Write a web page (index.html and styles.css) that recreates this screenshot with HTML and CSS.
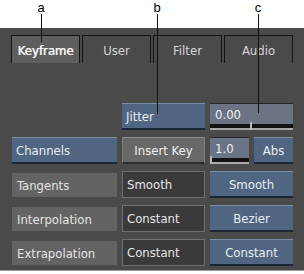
FILE: index.html
```html
<!DOCTYPE html>
<html lang="en">
<head>
<meta charset="UTF-8" />
<title>Keyframe</title>
<link rel="stylesheet" href="styles.css">
</head>
<body>
  <div class="shot">
    <!-- callouts -->
    <div class="callout callout-a"><span>a</span><i></i></div>
    <div class="callout callout-b"><span>b</span><i></i></div>
    <div class="callout callout-c"><span>c</span><i></i></div>

    <main class="panel">
      <nav class="tabs">
        <div class="tab active">Keyframe</div>
        <div class="tab">User</div>
        <div class="tab">Filter</div>
        <div class="tab">Audio</div>
      </nav>

      <section class="controls">
        <div></div>
        <div class="btn blue left">Jitter</div>
        <div class="value">
          <div class="value-text">0.00</div>
          <div class="value-bar"><b style="left: 40px"></b></div>
        </div>

        <div class="btn blue left wide">Channels</div>
        <div class="btn gray">Insert Key</div>
        <div class="pair">
          <div class="value">
            <div class="value-text">1.0</div>
            <div class="value-bar"><b style="left: 0px"></b></div>
          </div>
          <div class="btn blue">Abs</div>
        </div>

        <div class="label">Tangents</div>
        <div class="field">Smooth</div>
        <div class="btn blue">Smooth</div>

        <div class="label">Interpolation</div>
        <div class="field">Constant</div>
        <div class="btn blue">Bezier</div>

        <div class="label">Extrapolation</div>
        <div class="field">Constant</div>
        <div class="btn blue">Constant</div>
      </section>
    </main>
  </div>
</body>
</html>
```

FILE: styles.css
```css
/* Base */
* {
  box-sizing: border-box;
}
body {
  margin: 0;
  background: #fff;
  font-family: "DejaVu Sans Condensed", "DejaVu Sans", sans-serif;
  font-stretch: condensed;
  font-size: 13px;
}
.shot {
  position: relative;
  width: 304px;
  height: 274px;
  overflow: hidden;
}

/* Callout letters and leader lines */
.callout {
  position: absolute;
  top: 0;
  z-index: 2;
}
.callout span {
  position: absolute;
  top: 0;
  left: -6px;
  width: 12px;
  text-align: center;
  font-family: "Liberation Sans", Arial, sans-serif;
  font-stretch: normal;
  font-size: 13px;
  line-height: normal;
  color: #000;
}
.callout i {
  position: absolute;
  left: 0;
  top: 14px;
  width: 1px;
  background: #111;
}
.callout-a { left: 41px; }
.callout-a i { height: 28px; }
.callout-b { left: 157px; }
.callout-b i { height: 100px; }
.callout-c { left: 258px; }
.callout-c i { height: 99px; }

/* Panel */
.panel {
  margin-top: 28px;
  height: 243px;
  background: #4a4a4a;
  border-bottom: 1px solid #9c9c9c;
  padding-top: 7px;
}
.tabs {
  display: flex;
  gap: 2px;
  padding-left: 11px;
}
.tab {
  width: 69px;
  height: 28px;
  border: 1px solid #141414;
  border-bottom: none;
  display: flex;
  align-items: center;
  justify-content: center;
  color: #d6d6d6;
  padding-top: 1px;
}
.tab.active {
  background: #5e5e5e;
  color: #f4f4f4;
  text-shadow: 0.5px 0 0 #f4f4f4;
}

/* Control grid */
.controls {
  margin-top: 40px;
  padding-left: 12px;
  display: grid;
  grid-template-columns: 105px 83px 83px;
  grid-auto-rows: 27px;
  column-gap: 5px;
  row-gap: 7px;
}
.btn {
  display: flex;
  align-items: center;
  justify-content: center;
  color: #e9edf2;
  border-top: 1px solid #7d8ea3;
  border-bottom: 2px solid #1c2535;
}
.btn.left {
  justify-content: flex-start;
  padding-left: 4px;
}
.btn.blue {
  background: #4f6581;
}
.btn.gray {
  background: #686868;
  border-top-color: #8c8c8c;
  border-left: 1px solid #7e7e7e;
  border-right: 1px solid #7e7e7e;
  border-bottom-color: #2c2c2c;
  color: #f0f0f0;
}
.label {
  margin: 2px 0 1px;
  background: #636363;
  color: #e4e4e4;
  display: flex;
  align-items: center;
  padding-left: 5px;
}
.field {
  background: #3a3a3a;
  border: 1px solid #707070;
  color: #e6e6e6;
  display: flex;
  align-items: center;
  padding-left: 4px;
}

/* Numeric value with slider bar */
.value {
  display: flex;
  flex-direction: column;
  border-top: 1px solid #262626;
}
.value-text {
  flex: 1;
  background: #6b7484;
  color: #eef0f3;
  padding-left: 5px;
  display: flex;
  align-items: center;
}
.value-bar {
  position: relative;
  height: 4px;
  background: #121212;
  border-bottom: 2px solid #a8a8a8;
  box-sizing: content-box;
}
.value-bar b {
  position: absolute;
  top: -2px;
  bottom: -2px;
  width: 2px;
  background: #b8b8b8;
}
.pair {
  display: flex;
  gap: 5px;
}
.pair > * {
  flex: 1;
}
```
